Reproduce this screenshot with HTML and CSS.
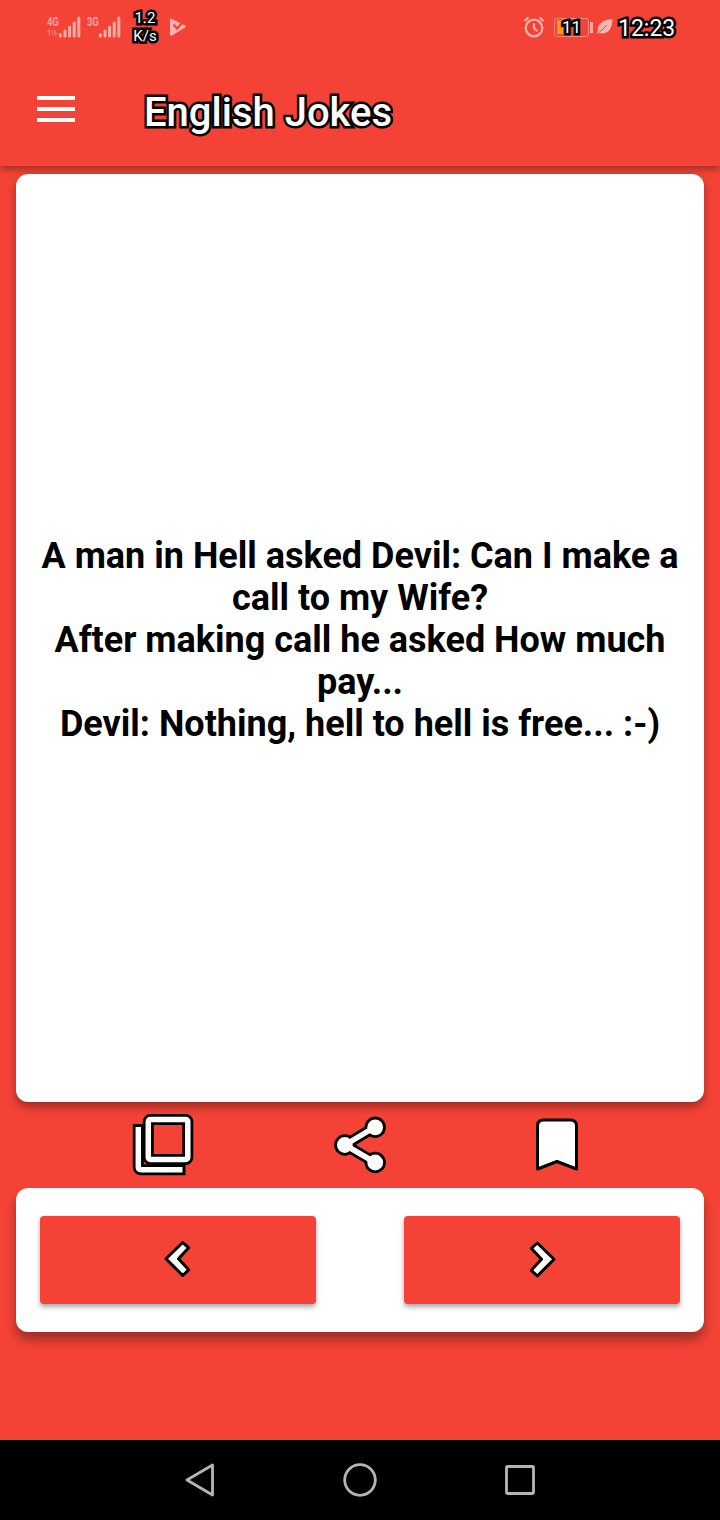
FILE: index.html
```html
<!DOCTYPE html>
<html lang="en">
<head>
<meta charset="utf-8">
<title>English Jokes</title>
<link rel="stylesheet" href="styles.css">
</head>
<body>
<div class="screen">
  <header class="top">
    <div class="status">
      <div class="sim"><span class="net">4G</span>
        <svg class="signal" width="34" height="22" viewBox="0 0 34 22"><path class="data" d="M2.500 20v-6l-2 2M5.500 14v6M8 14v5l2-2"/><path class="bars" d="M13.300 20v-1.500M18 20v-5M22.600 20v-9M27.200 20v-13M31.800 20V2"/></svg>
      </div>
      <div class="sim second"><span class="net">3G</span>
        <svg class="signal" width="34" height="22" viewBox="0 0 34 22"><path class="bars" d="M13.300 20v-1.500M18 20v-5M22.600 20v-9M27.200 20v-13M31.800 20V2"/></svg>
      </div>
      <div class="speed outlined"><span>1.2</span><span>K/s</span></div>
      <svg class="play" width="18" height="18" viewBox="0 0 18 18"><path class="soft" d="M1 1.200Q1.500 .3 2.500 .7L16 7.500q1.500 1 0 2L3 17.500q-2 .5-2-1z"/><path class="check" d="M4.500 6.500l3.500 4L15 3"/></svg>
      <svg class="alarm" width="22" height="24" viewBox="0 0 22 24"><circle cx="11" cy="13" r="8.300"/><path d="M11 8.500V13l3.200 3.200M1.500 6l4-3.500M16.500 2.500l4 3.500"/></svg>
      <div class="battery"><span class="charge"></span><span class="level outlined">11</span></div>
      <span class="tip"></span>
      <svg class="leaf" width="16" height="18" viewBox="0 0 16 18"><path class="soft" d="M15.500 1C5 2 .5 6 1 12l-.8 4 2.300-1C11 17 15 11 15.500 1z"/><path class="vein" d="M2 14.500L10 7"/></svg>
      <span class="clock outlined">12:23</span>
    </div>
    <div class="bar">
      <svg width="38" height="26" viewBox="0 0 38 26" fill="#fff"><path d="M0 0h38v4H0zM0 11h38v4H0zM0 22h38v4H0z"/></svg>
      <h1 class="title outlined">English Jokes</h1>
    </div>
  </header>
  <main class="content">
    <section class="joke">A man in Hell asked Devil: Can I make a<br>call to my Wife?<br>After making call he asked How much<br>pay...<br>Devil: Nothing, hell to hell is free... :-)</section>
    <div class="actions">
      <svg width="64" height="64" viewBox="0 0 64 64">
        <path class="edge cap" d="M7.300 16.500V54q0 2.700 2.700 2.700h39"/><path class="line" d="M7.300 14v40q0 2.700 2.700 2.700h41.500"/>
        <rect class="edge" x="17.300" y="6.500" width="39.500" height="40" rx="2"/><rect class="line" x="17.300" y="6.500" width="39.500" height="40" rx="2"/>
      </svg>
      <svg width="64" height="64" viewBox="0 0 64 64">
        <g fill="#000"><circle cx="47.200" cy="14.300" r="10.700"/><circle cx="16.800" cy="32" r="10.700"/><circle cx="47.200" cy="49.500" r="10.700"/></g>
        <path class="edge" d="M47 14L17 32l30 17.500"/><path class="line" d="M47 14L17 32l30 17.500"/>
        <g fill="#fff"><circle cx="47.200" cy="14.300" r="7.900"/><circle cx="16.800" cy="32" r="7.900"/><circle cx="47.200" cy="49.500" r="7.900"/></g>
      </svg>
      <svg width="64" height="64" viewBox="0 0 64 64"><path class="solid" d="M12.500 56V13q0-6 6-6h27q6 0 6 6v43L32 48.500z"/></svg>
    </div>
    <nav class="pager">
      <button class="step" aria-label="Previous"><svg width="30" height="40" viewBox="0 0 30 40"><path class="solid" d="M19.700 2.500l6 5.300L15.500 18.800l10.200 11-6 5.700L3 18.800z"/></svg></button>
      <button class="step" aria-label="Next"><svg width="30" height="40" viewBox="0 0 30 40"><path class="solid" d="M10.300 3l-6 5.300 10.200 11-10.200 11 6 5.700L27 19.300z"/></svg></button>
    </nav>
  </main>
  <footer class="system">
    <svg width="36" height="36" viewBox="0 0 36 36"><path d="M30.500 3v30L5 18z"/></svg>
    <svg width="36" height="36" viewBox="0 0 36 36"><circle cx="18" cy="18" r="15.300"/></svg>
    <svg width="36" height="36" viewBox="0 0 36 36"><rect x="4.500" y="4.500" width="27" height="27" rx="1"/></svg>
  </footer>
</div>
</body>
</html>
```
FILE: styles.css
```css
* { box-sizing: border-box; }
body { margin: 0; font-family: Roboto, sans-serif; }
svg { display: block; flex: none; }
.screen { width: 720px; height: 1520px; display: flex; flex-direction: column; background: #f44336; overflow: hidden; }
.outlined { color: #fff; -webkit-text-stroke: 5px #000; paint-order: stroke fill; stroke-linejoin: round; }

.top { height: 166px; flex: none; background: #f44336; box-shadow: 0 3px 8px rgba(0,0,0,.35); }
.status { height: 54px; display: flex; align-items: center; padding-left: 47px; }
.sim { width: 34px; height: 22px; display: grid; }
.sim > * { grid-area: 1 / 1; }
.second { margin-left: 6px; }
.net { color: #fba59d; font: bold 13px/11px Roboto, sans-serif; transform: scaleX(.72); transform-origin: left; }
.signal { fill: none; stroke: #fbaea7; }
.bars { stroke-width: 3; stroke-linecap: round; }
.data { stroke: #f7776d; stroke-width: 1.3; }
.speed { width: 30px; margin-left: 9px; display: flex; flex-direction: column; align-items: center; font-size: 15px; line-height: 18px; }
.play { margin-left: 9px; }
.soft { fill: #fbb4ae; }
.check { fill: none; stroke: #f44336; stroke-width: 2.2; }
.alarm { margin-left: 336px; fill: none; stroke: #fbb4ae; stroke-width: 2.2; }
.battery { width: 35px; height: 19px; margin-left: 9px; padding: 1px 2px; border: 1.500px solid #f98a80; border-radius: 3px; display: grid; align-items: center; }
.battery > * { grid-area: 1 / 1; }
.charge { width: 6px; height: 14px; background: #ff9820; }
.level { font-size: 17px; line-height: 14px; margin-top: -1px; text-align: center; }
.tip { width: 3px; height: 11px; margin-left: 1px; background: #fba59d; }
.leaf { margin-left: 4px; }
.vein { fill: none; stroke: #f44336; stroke-width: 1; }
.clock { margin: 3px 0 0 5px; font-size: 23px; line-height: 28px; }

.bar { height: 112px; display: flex; align-items: center; padding: 0 37px; gap: 69px; }
.bar svg { margin-bottom: 2px; }
.title { margin: 6px 0 0; font-size: 40px; line-height: 48px; font-weight: 500; white-space: nowrap; }

.content { height: 1274px; padding: 8px 16px 0; }
.joke { height: 928px; padding-top: 4px; border-radius: 12px; background: #fff; box-shadow: 0 5px 10px rgba(0,0,0,.35); text-align: center; font-size: 36px; line-height: 42px; font-weight: 700; color: #000; white-space: nowrap; display: grid; align-content: center; }
.actions { height: 86px; padding: 0 115px; display: flex; align-items: center; justify-content: space-between; }
.edge { fill: none; stroke: #000; stroke-width: 11; stroke-linejoin: round; }
.cap { stroke-linecap: square; }
.line { fill: none; stroke: #fff; stroke-width: 5.500; }
.solid { fill: #fff; stroke: #000; stroke-width: 3; stroke-linejoin: round; }
.pager { height: 144px; padding: 28px 24px; border-radius: 12px; background: #fff; box-shadow: 0 8px 12px rgba(0,0,0,.35); display: flex; justify-content: space-between; }
.step { width: 276px; height: 88px; padding: 0; border: 0; border-radius: 4px; background: #f44336; box-shadow: 0 3px 5px rgba(0,0,0,.35); display: grid; place-items: center; }

.system { height: 80px; background: #000; display: flex; justify-content: center; align-items: center; gap: 124px; }
.system svg { fill: none; stroke: #b5b5b5; stroke-width: 2.800; stroke-linejoin: round; }
```
